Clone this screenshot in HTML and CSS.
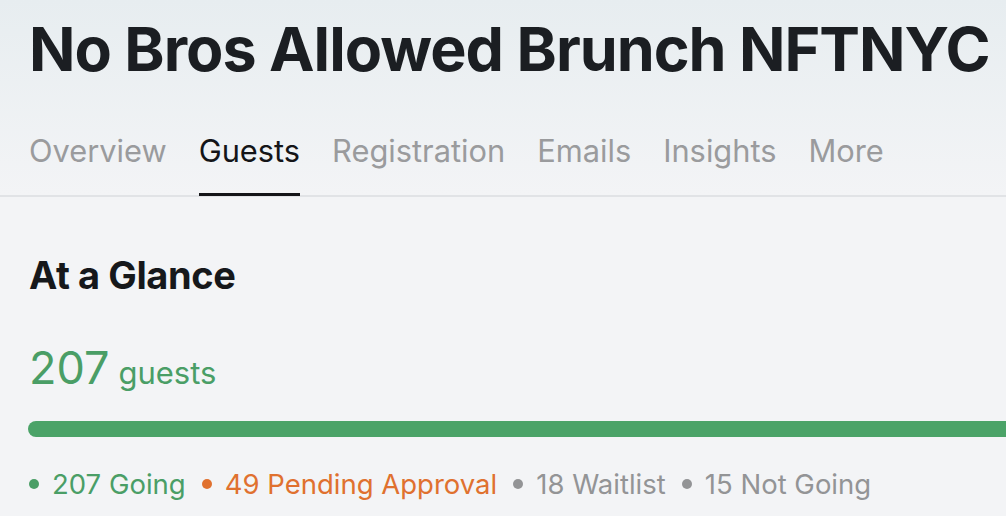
FILE: index.html
```html
<!DOCTYPE html>
<html>
<head>
<meta charset="utf-8">
<link rel="stylesheet" href="styles.css">
</head>
<body>
<header class="head">
  <h1 class="title">No Bros Allowed Brunch NFTNYC</h1>
  <nav class="tabs">
    <a class="tab">Overview</a>
    <a class="tab active">Guests</a>
    <a class="tab">Registration</a>
    <a class="tab">Emails</a>
    <a class="tab">Insights</a>
    <a class="tab">More</a>
  </nav>
</header>
<main class="content">
  <h2 class="section">At a Glance</h2>
  <div class="count"><span class="num">207</span><span class="unit">guests</span></div>
  <div class="bar"><div class="fill" style="width:100%"></div></div>
  <div class="legend">
    <span class="item going"><i class="dot"></i>207 Going</span>
    <span class="item pending"><i class="dot"></i>49 Pending Approval</span>
    <span class="item gray"><i class="dot"></i>18 Waitlist</span>
    <span class="item gray"><i class="dot"></i>15 Not Going</span>
  </div>
</main>
</body>
</html>
```
FILE: styles.css
```css
html, body { margin: 0; padding: 0; }
body {
  font-family: Inter, "Noto Sans", sans-serif;
  background: #f3f4f6;
  width: 1006px;
  height: 516px;
  overflow: hidden;
}
.head {
  background: linear-gradient(#e7edf0, #f3f4f6);
  border-bottom: 2px solid #e1e3e6;
  padding: 10px 0 0 29px;
}
.title {
  margin: 0;
  font-size: 61px;
  font-weight: 700;
  color: #1b1e22;
  letter-spacing: -1px;
  line-height: 78px;
  white-space: nowrap;
}
.tabs {
  display: flex;
  gap: 32px;
  margin-top: 43px;
}
.tab {
  font-size: 30.8px;
  color: #9a9b9d;
  padding-bottom: 22px;
  border-bottom: 3px solid transparent;
  line-height: 40px;
  margin-bottom: -1px;
}
.tab.active {
  color: #141518;
  border-bottom-color: #141518;
}
.content {
  padding: 0 0 0 29px;
}
.section {
  margin: 0;
  padding-top: 55px;
  font-size: 38px;
  font-weight: 700;
  color: #16181b;
  line-height: 46px;
  letter-spacing: -0.4px;
}
.count {
  margin-top: 44px;
  color: #4a9e66;
  display: flex;
  align-items: baseline;
  gap: 9px;
  line-height: 52px;
}
.num { font-size: 45px; }
.unit { font-size: 31px; }
.bar {
  margin-top: 22px;
  margin-left: -1px;
  height: 16px;
  width: 1200px;
  border-radius: 8px;
  background: #dfe3e6;
  overflow: hidden;
}
.fill { height: 100%; background: #4ba368; }
.legend {
  display: flex;
  gap: 16px;
  margin-top: 29px;
  font-size: 27.5px;
  line-height: 36px;
}
.item { display: flex; align-items: center; gap: 13px; }
.dot {
  width: 10px; height: 10px; border-radius: 50%;
  background: currentColor;
  display: inline-block;
}
.going { color: #4a9e66; }
.pending { color: #e0712f; }
.gray { color: #939496; }
```
